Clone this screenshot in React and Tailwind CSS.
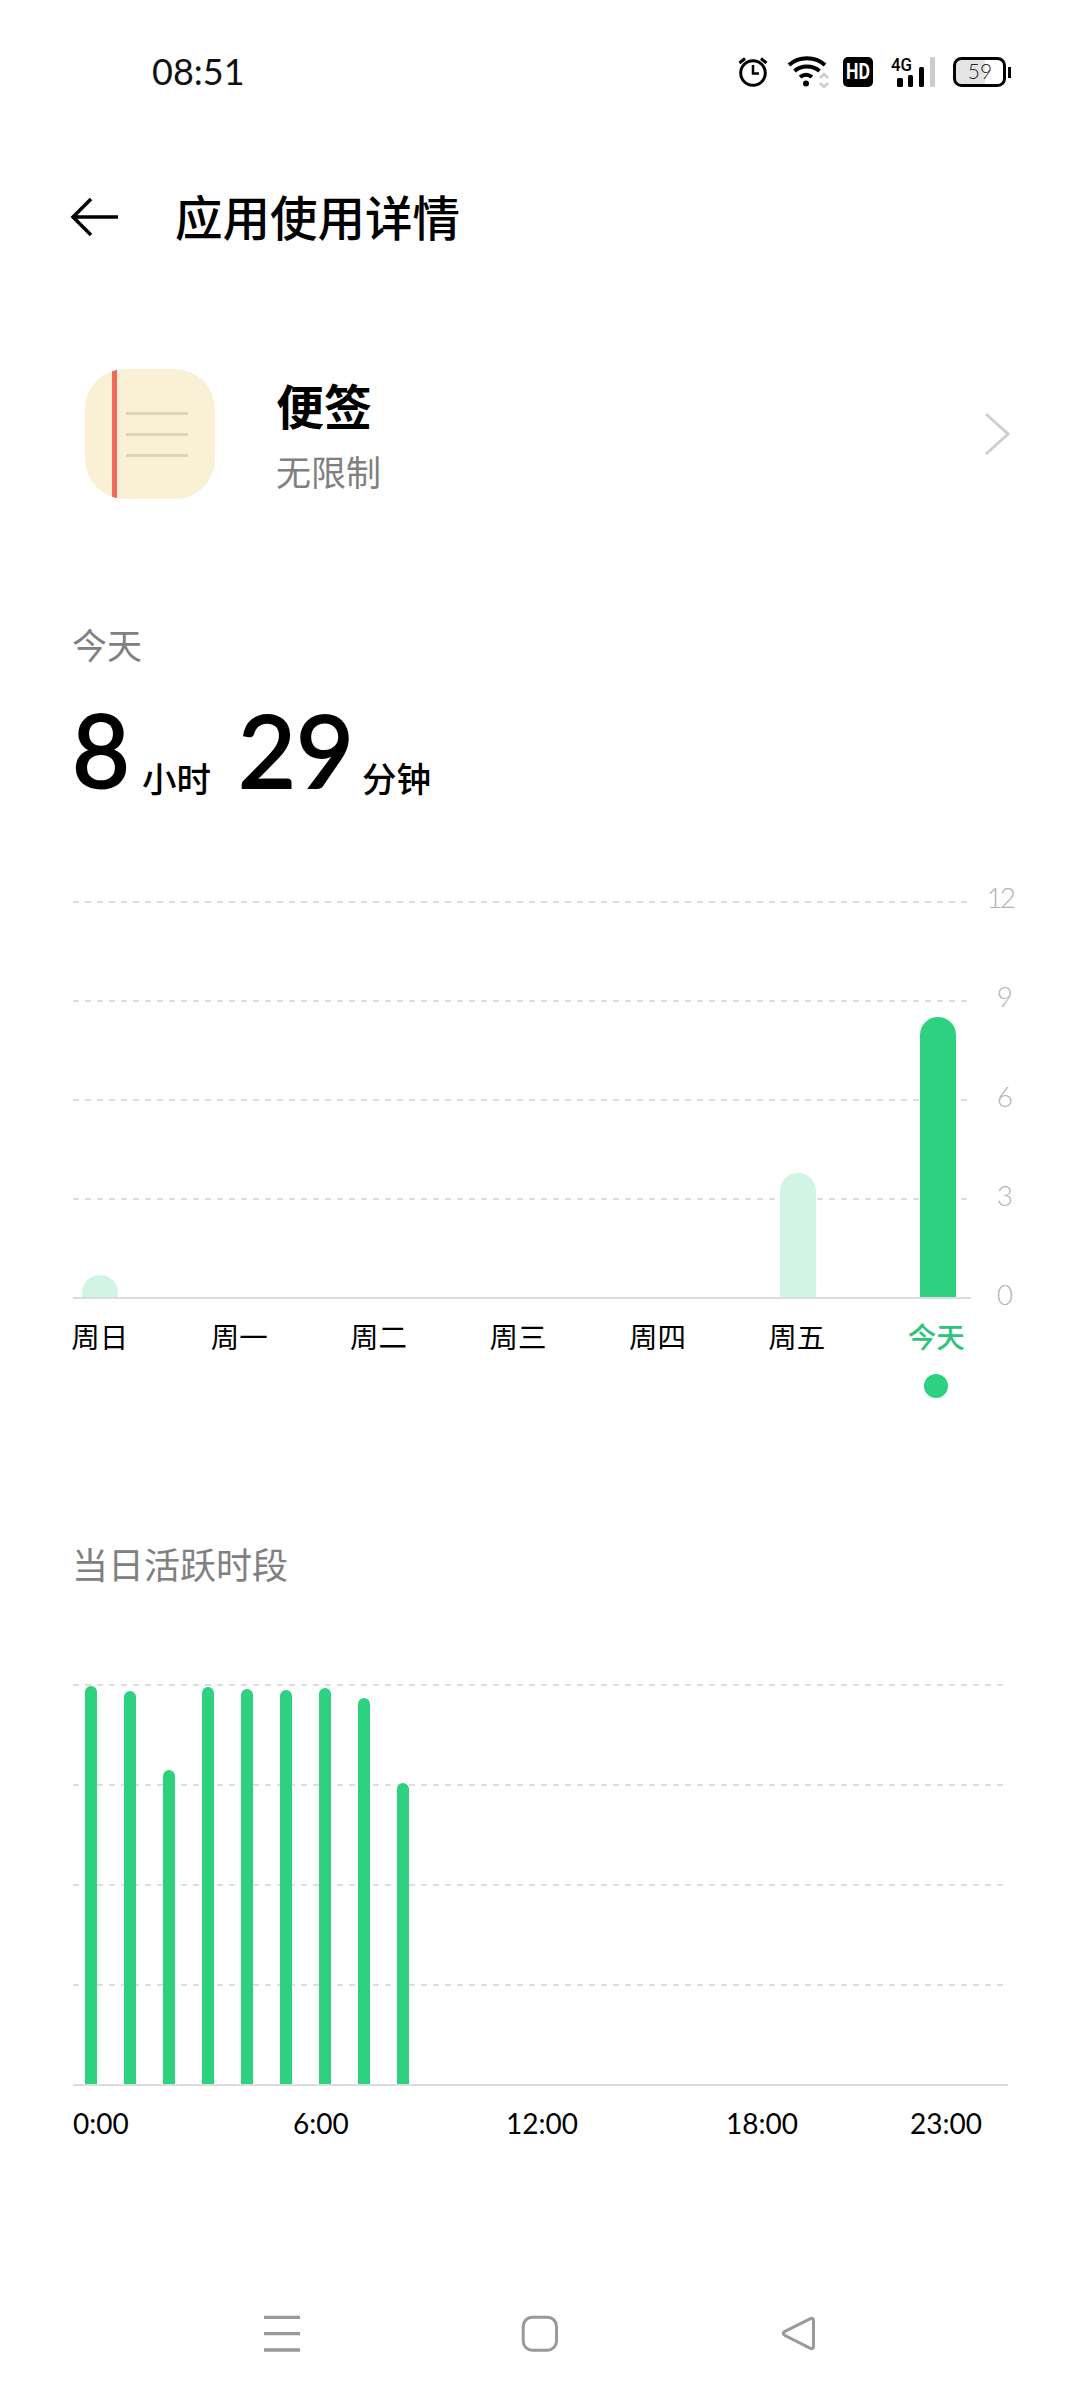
const GREEN = '#2dd17f'
const LIGHT = '#d2f4e4'
const CJK = "font-['Noto_Sans_CJK_SC',sans-serif]"
const NUM = "font-['Lato','Noto_Sans_CJK_SC',sans-serif]"

const WEEK = [
  { label: '周日', x: 9, top: 374 },
  { label: '周一' },
  { label: '周二' },
  { label: '周三' },
  { label: '周四' },
  { label: '周五', x: 707, top: 272 },
  { label: '今天', x: 847, top: 116, active: true },
]
const HOURS = [2, 7, 86, 3, 5, 6, 4, 14, 99]
const HOUR_LABELS = [
  { label: '0:00', w: 'w-[220px]' },
  { label: '6:00', w: 'w-[213px]' },
  { label: '12:00', w: 'w-[220px]' },
  { label: '18:00', w: 'w-[184px]' },
  { label: '23:00', w: 'w-[72px]' },
]

// bar with a rounded top, standing on the baseline
function barPath(x, top, w, base) {
  const r = w / 2
  return `M${x} ${base}V${top + r}A${r} ${r} 0 0 1 ${x + w} ${top + r}V${base}Z`
}

function StatusIcons() {
  return (
    <svg width="360" height="50" viewBox="0 0 360 50" className="block">
      {/* alarm */}
      <circle cx="73" cy="28" r="12.3" fill="none" stroke="#000" strokeWidth="3" />
      <path d="M73 20v8.500h6" fill="none" stroke="#000" strokeWidth="2.500" />
      <path d="M59.500 18l5.500-4.500M86.500 18l-5.500-4.500" fill="none" stroke="#000" strokeWidth="3" />
      {/* wifi */}
      <path d="M109 20c10-9 26-9 36 0M114.500 26c7-6 18-6 25 0M120 32c4-3 8-3 12 0" fill="none" stroke="#000" strokeWidth="4" />
      <circle cx="126" cy="38.500" r="3" fill="#000" />
      <path d="M140 33l4-4 4 4M140 38l4 4 4-4" fill="none" stroke="#ccc" strokeWidth="2.500" />
      {/* HD */}
      <rect x="163" y="12" width="30" height="30" rx="5" fill="#000" />
      <text x="178" y="34" textAnchor="middle" textLength="24" lengthAdjust="spacingAndGlyphs" fontFamily="Roboto, sans-serif" fontWeight="700" fontSize="22" fill="#fff">HD</text>
      {/* 4G + signal */}
      <text x="211" y="26" textLength="21" lengthAdjust="spacingAndGlyphs" fontFamily="Roboto, sans-serif" fontWeight="500" fontSize="19" fill="#000">4G</text>
      <rect x="217" y="33" width="6" height="9" rx="1.500" fill="#000" />
      <rect x="228" y="30" width="5" height="12" rx="1.500" fill="#000" />
      <rect x="239" y="22" width="5" height="20" rx="1.500" fill="#000" />
      <rect x="250" y="12" width="5" height="30" rx="1" fill="#ccc" />
      {/* battery */}
      <rect x="276" y="14" width="29" height="26" fill="#e4e4e4" />
      <rect x="274.500" y="13.500" width="50" height="27" rx="7" fill="none" stroke="#000" strokeWidth="3" />
      <path d="M328 22h3v11h-3z" fill="#000" />
      <text x="300" y="34" textAnchor="middle" fontFamily="Lato, sans-serif" fontWeight="300" fontSize="21" fill="#222">59</text>
    </svg>
  )
}

function AppIcon() {
  return (
    <div className="relative h-[130px] w-[130px] shrink-0 overflow-hidden rounded-[40px] bg-[#faf0d6]">
      <div className="absolute left-[27px] top-0 h-full w-[5px] bg-[#ee6b5f]" />
      <div className="absolute left-[41px] top-[43px] flex w-[62px] flex-col gap-[18px]">
        <div className="h-[3px] bg-[#ddd3b6]" />
        <div className="h-[3px] bg-[#ddd3b6]" />
        <div className="h-[3px] bg-[#ddd3b6]" />
      </div>
    </div>
  )
}

function WeekChart() {
  return (
    <div>
      <div className="flex items-start pl-[73px]">
        <svg width="898" height="398" viewBox="0 0 898 398" className="block shrink-0">
          {[1, 100, 199, 298].map((y) => (
            <line key={y} x1="0" x2="894" y1={y} y2={y} stroke="#dedede" strokeWidth="2" strokeDasharray="6 6" />
          ))}
          {WEEK.filter((d) => d.x != null).map((d) => (
            <path key={d.label} d={barPath(d.x, d.top, 36, 397)} fill={d.active ? GREEN : LIGHT} />
          ))}
          <rect x="0" y="396" width="898" height="2" fill="#dcdcdc" />
        </svg>
        <div className={`ml-[18px] mt-[-20px] flex h-[429px] w-[24px] flex-col items-end justify-between text-[28px] leading-[32px] font-light text-[#b5b5b5] ${NUM}`}>
          {[12, 9, 6, 3, 0].map((n) => <span key={n} className={n === 12 ? 'tracking-[-3px]' : ''}>{n}</span>)}
        </div>
      </div>
      <div className={`ml-[30px] mt-[4px] grid w-[976px] grid-cols-7 text-[28.500px] leading-[44px] ${CJK}`}>
        {WEEK.map((d) => (
          <div key={d.label} className="flex flex-col items-center">
            <span className={d.active ? 'font-medium text-[#2dc47c]' : 'text-black'}>{d.label}</span>
            {d.active && <span className="mt-[16px] h-[24px] w-[24px] rounded-full bg-[#2dd17f]" />}
          </div>
        ))}
      </div>
    </div>
  )
}

function HourChart() {
  return (
    <div className="pl-[73px]">
      <svg width="935" height="402" viewBox="0 0 935 402" className="block">
        {[1, 101, 201, 301].map((y) => (
          <line key={y} x1="0" x2="932" y1={y} y2={y} stroke="#dedede" strokeWidth="2" strokeDasharray="6 6" />
        ))}
        {HOURS.map((top, i) => (
          <path key={i} d={barPath(12 + i * 39, top, 12, 401)} fill={GREEN} />
        ))}
        <rect x="0" y="400" width="935" height="2" fill="#dcdcdc" />
      </svg>
      <div className={`mt-[15px] flex text-[28px] leading-[44px] text-black ${NUM}`}>
        {HOUR_LABELS.map((h) => (
          <span key={h.label} className={`${h.w} shrink-0`}>{h.label}</span>
        ))}
      </div>
    </div>
  )
}

function NavBar() {
  return (
    <svg width="552" height="38" viewBox="0 0 552 38" className="block">
      <path d="M0 2.300h36M0 18.700h36M0 35h36" stroke="#999" strokeWidth="3.300" fill="none" />
      <rect x="259.200" y="2.200" width="33.300" height="33" rx="9" fill="none" stroke="#999" strokeWidth="3" />
      <path d="M549.500 6V31Q549.500 35 546 33.200L521 20.500Q517.500 18.400 521 16.300L546 3.800Q549.500 2 549.500 6Z" fill="none" stroke="#999" strokeWidth="3" />
    </svg>
  )
}

export default function App() {
  return (
    <div className={`flex h-[2400px] w-[1080px] flex-col overflow-hidden bg-white ${CJK}`}>
      <div className="flex h-[142px] shrink-0 items-center justify-between pl-[152px] pr-[40px]">
        <span className={`text-[36px] leading-none text-[#111] ${NUM}`}>08:51</span>
        <div className="mb-[2px] w-[360px]"><StatusIcons /></div>
      </div>

      <div className="flex h-[150px] shrink-0 items-center pl-[70px]">
        <svg width="48" height="40" viewBox="0 0 48 40" className="shrink-0" fill="none" stroke="#000" strokeWidth="3.500">
          <path d="M48 20H3M21 2L3 20l18 18" />
        </svg>
        <h1 className="mb-[3px] ml-[57px] text-[47.500px] leading-none font-medium text-black">应用使用详情</h1>
      </div>

      <div className="flex h-[284px] shrink-0 items-center pl-[85px] pr-[70px]">
        <AppIcon />
        <div className="ml-[61px] flex flex-col">
          <span className="text-[48px] leading-[64px] font-bold text-black">便签</span>
          <span className="mt-[10px] text-[35px] leading-[50px] text-[#808080]">无限制</span>
        </div>
        <svg width="26" height="44" viewBox="0 0 26 44" className="ml-auto" fill="none" stroke="#cfcfcf" strokeWidth="3">
          <path d="M2 2l22 20L2 42" />
        </svg>
      </div>

      <div className="mt-[43px] shrink-0 pl-[72px]">
        <div className="text-[35px] leading-[50px] text-[#808080]">今天</div>
        <div className="mt-[23px] flex h-[110px] items-end text-black">
          <span className={`mb-[3px] text-[100px] leading-[100px] [-webkit-text-stroke:2px_black] ${NUM}`}>8</span>
          <span className="ml-[12px] text-[34.500px] leading-[50px] font-medium">小时</span>
          <span className={`mb-[3px] ml-[27px] text-[100px] leading-[100px] [-webkit-text-stroke:2px_black] ${NUM}`}>29</span>
          <span className="ml-[8px] text-[34.500px] leading-[50px] font-medium">分钟</span>
        </div>
      </div>

      <div className="mt-[99px] shrink-0"><WeekChart /></div>

      <div className="mt-[140px] shrink-0 pl-[72px] text-[36px] leading-[50px] text-[#808080]">当日活跃时段</div>

      <div className="mt-[96px] shrink-0"><HourChart /></div>

      <div className="mb-[47px] mt-auto pl-[264px]"><NavBar /></div>
    </div>
  )
}
